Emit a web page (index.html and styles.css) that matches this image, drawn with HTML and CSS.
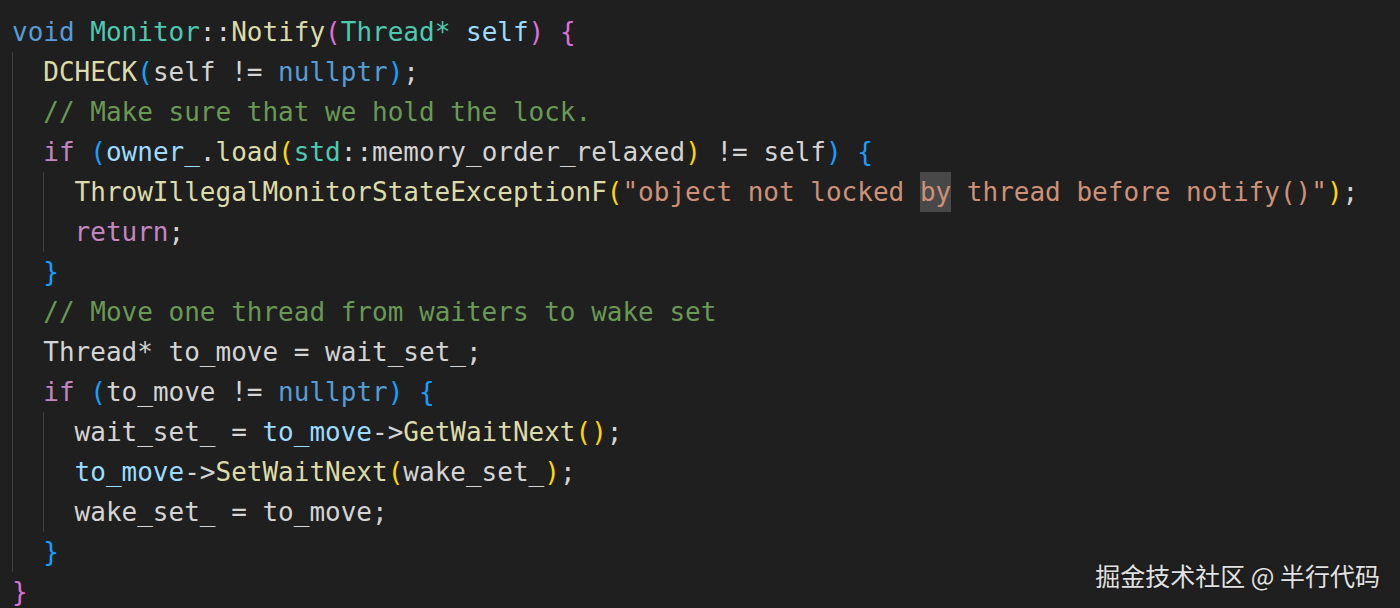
FILE: index.html
```html
<!DOCTYPE html>
<html lang="en">
<head>
<meta charset="utf-8">
<title>Monitor::Notify</title>
<link rel="stylesheet" href="styles.css">
</head>
<body>
<div class="editor">
  <div class="code">
    <div class="line"><span class="kw">void</span> <span class="ty">Monitor</span>::<span class="fn">Notify</span><span class="b2">(</span><span class="ty">Thread*</span> <span class="var">self</span><span class="b2">)</span> <span class="b2">{</span></div>
    <div class="block">
      <div class="line"><span class="fn">DCHECK</span><span class="b3">(</span>self != <span class="kw">nullptr</span><span class="b3">)</span>;</div>
      <div class="line"><span class="cm">// Make sure that we hold the lock.</span></div>
      <div class="line"><span class="ctl">if</span> <span class="b3">(</span><span class="var">owner_</span>.<span class="fn">load</span><span class="b1">(</span><span class="ty">std</span>::memory_order_relaxed<span class="b1">)</span> != self<span class="b3">)</span> <span class="b3">{</span></div>
      <div class="block">
        <div class="line"><span class="fn">ThrowIllegalMonitorStateExceptionF</span><span class="b1">(</span><span class="str">"object not locked <span class="hl">by</span> thread before notify()"</span><span class="b1">)</span>;</div>
        <div class="line"><span class="ctl">return</span>;</div>
      </div>
      <div class="line"><span class="b3">}</span></div>
      <div class="line"><span class="cm">// Move one thread from waiters to wake set</span></div>
      <div class="line">Thread* to_move = wait_set_;</div>
      <div class="line"><span class="ctl">if</span> <span class="b3">(</span>to_move != <span class="kw">nullptr</span><span class="b3">)</span> <span class="b3">{</span></div>
      <div class="block">
        <div class="line">wait_set_ = <span class="var">to_move</span>-&gt;<span class="fn">GetWaitNext</span><span class="b1">()</span>;</div>
        <div class="line"><span class="var">to_move</span>-&gt;<span class="fn">SetWaitNext</span><span class="b1">(</span>wake_set_<span class="b1">)</span>;</div>
        <div class="line">wake_set_ = to_move;</div>
      </div>
      <div class="line"><span class="b3">}</span></div>
    </div>
    <div class="line"><span class="b2">}</span></div>
  </div>
  <div class="watermark">掘金技术社区 @ 半行代码</div>
</div>
</body>
</html>
```

FILE: styles.css
```css
html, body {
  margin: 0;
  padding: 0;
  background: #1f1f1f;
}

.editor {
  position: relative;
  width: 1400px;
  height: 608px;
  overflow: hidden;
  background: #1f1f1f;
}

.code {
  padding: 12px 0 0 12px;
  font-family: "DejaVu Sans Mono", monospace;
  font-size: 26px;
  color: #d4d4d4;
}

.line {
  height: 40px;
  line-height: 40px;
  white-space: pre;
}

.block {
  border-left: 1px solid #404040;
  padding-left: calc(2ch - 1px);
}

.kw { color: #569cd6; }
.ty { color: #4ec9b0; }
.fn { color: #dcdcaa; }
.var { color: #9cdcfe; }
.ctl { color: #c586c0; }
.cm { color: #6a9955; }
.str { color: #ce9178; }
.b1 { color: #ffd700; }
.b2 { color: #da70d6; }
.b3 { color: #179fff; }

.hl {
  background: #484848;
  display: inline-block;
  height: 40px;
}

.watermark {
  position: absolute;
  right: 20px;
  bottom: 18px;
  font-family: "Noto Sans CJK SC", "Noto Sans", sans-serif;
  font-size: 25px;
  line-height: 30px;
  color: #e2e2e2;
  text-shadow: 0 0 2px rgba(0, 0, 0, 0.5);
}
```
